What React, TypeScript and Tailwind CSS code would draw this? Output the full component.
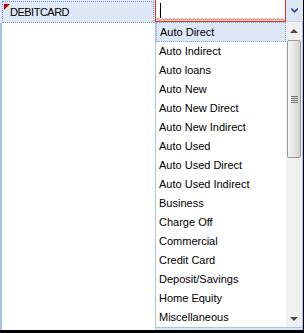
import { ChevronDown } from 'lucide-react'

const items = [
  'Auto Direct',
  'Auto Indirect',
  'Auto loans',
  'Auto New',
  'Auto New Direct',
  'Auto New Indirect',
  'Auto Used',
  'Auto Used Direct',
  'Auto Used Indirect',
  'Business',
  'Charge Off',
  'Commercial',
  'Credit Card',
  'Deposit/Savings',
  'Home Equity',
  'Miscellaneous',
]

function Squiggle() {
  return (
    <svg width="130" height="3" className="block" viewBox="0 0 130 3">
      <polyline
        fill="none"
        stroke="#d9381e"
        strokeWidth="1"
        points={Array.from({ length: 66 }, (_, i) => `${i * 2},${i % 2 === 0 ? 2.5 : 0.5}`).join(' ')}
      />
    </svg>
  )
}

export default function App() {
  return (
    <div
      className="w-[304px] h-[333px] flex bg-white border-r border-b-[3px] border-black overflow-hidden text-[11px] text-black"
      style={{ fontFamily: '"Liberation Sans", Arial, sans-serif' }}
    >
      {/* Left column: grid cell + blank */}
      <div className="w-[155px] flex flex-col">
        <div className="h-[23px] bg-[#dfe8f6] pl-[2px] pt-[1px] pr-[1px]">
          <div className="relative h-[22px] border border-dotted border-[#7d9bd4] pl-[7px] leading-[21px] tracking-[-0.5px]">
            <span className="absolute left-[1px] top-[2px] w-0 h-0 border-t-[6px] border-r-[6px] border-t-[#c00000] border-r-transparent" />
            DEBITCARD
          </div>
        </div>
        <div className="flex-1 border-l-2 border-[#a9c5ec]" />
      </div>

      {/* Right column: editor + dropdown */}
      <div className="w-[148px] flex flex-col">
        <div className="h-[22px] flex">
          <div className="w-[131px] flex flex-col border-l border-r border-[#d9381e] bg-white">
            <div className="flex-1 pl-[4px] pt-[3px]">
              <div className="w-px h-[15px] bg-black" />
            </div>
            <Squiggle />
            <div className="h-px bg-[#d9381e]" />
          </div>
          <div className="w-[17px] bg-[#dce6f4] border-b border-[#c3d4ec] flex items-center justify-center">
            <ChevronDown className="w-[11px] h-[11px] text-[#2a4d8f]" strokeWidth={3.5} />
          </div>
        </div>

        <div className="flex-1 flex flex-col border-r border-[#a9c5ec]">
          <div className="flex-1 flex min-h-0">
            <div className="w-[131px] border-l border-[#a9c5ec] overflow-hidden pt-[1px]">
              {items.map((it, i) => (
                <div
                  key={it}
                  className={
                    'h-[19px] leading-[19px] pl-[3px] whitespace-nowrap ' +
                    (i === 0 ? 'bg-[#dde7f5] border border-dotted border-[#8aa5d6] leading-[17px] pl-[2px] -mt-[1px] h-[20px]' : '')
                  }
                >
                  {it}
                </div>
              ))}
            </div>
            {/* Scrollbar */}
            <div className="w-[16px] bg-[#f0f0f0] flex flex-col">
              <div className="h-[17px] flex items-center justify-center">
                <div className="w-0 h-0 border-l-[4px] border-r-[4px] border-b-[4px] border-l-transparent border-r-transparent border-b-[#4a4a4a]" />
              </div>
              <div className="flex-1 px-px pt-[1px]">
                <div className="h-[118px] rounded-[2px] border border-[#9a9a9a] bg-gradient-to-r from-[#f6f6f6] via-[#e6e6e6] to-[#d2d2d2] flex flex-col items-center justify-center gap-px">
                  <div className="w-[7px] h-px bg-[#6f6f6f]" />
                  <div className="w-[7px] h-px bg-[#6f6f6f]" />
                  <div className="w-[7px] h-px bg-[#6f6f6f]" />
                  <div className="w-[7px] h-px bg-[#6f6f6f]" />
                </div>
              </div>
              <div className="h-[17px] flex items-center justify-center">
                <div className="w-0 h-0 border-l-[4px] border-r-[4px] border-t-[4px] border-l-transparent border-r-transparent border-t-[#4a4a4a]" />
              </div>
            </div>
          </div>
          {/* Resize footer */}
          <div className="h-[10px] bg-[#dce7f5] border-t border-l border-[#a9c5ec] flex justify-end items-end pr-[1px] pb-[1px]">
            <svg width="6" height="6" viewBox="0 0 6 6">
              <rect x="4" y="0" width="2" height="2" fill="#8fa8cc" />
              <rect x="2" y="2" width="2" height="2" fill="#8fa8cc" />
              <rect x="4" y="2" width="2" height="2" fill="#8fa8cc" />
              <rect x="0" y="4" width="2" height="2" fill="#8fa8cc" />
              <rect x="2" y="4" width="2" height="2" fill="#8fa8cc" />
              <rect x="4" y="4" width="2" height="2" fill="#8fa8cc" />
            </svg>
          </div>
        </div>
      </div>
    </div>
  )
}
